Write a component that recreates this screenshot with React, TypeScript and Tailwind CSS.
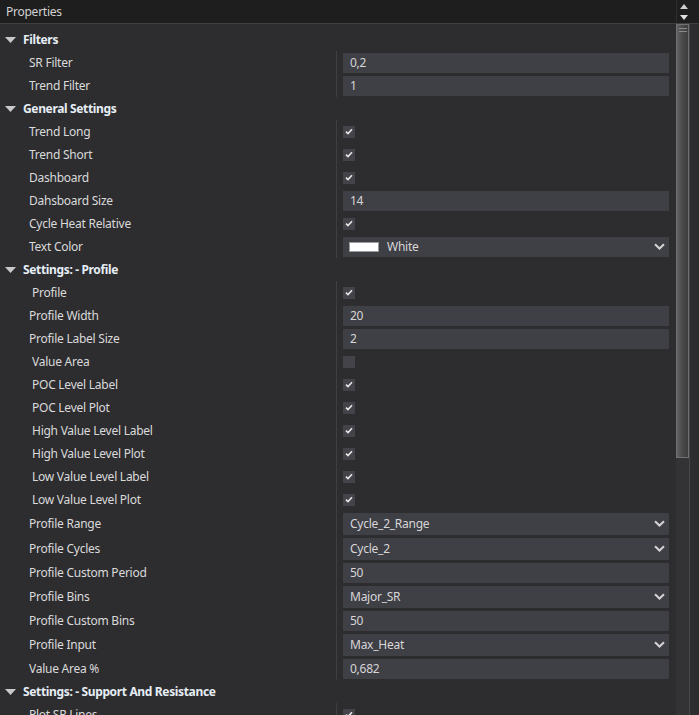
import React from 'react';

type Row =
  | { kind: 'header'; label: string }
  | { kind: 'text'; label: string; value: string; indent?: boolean }
  | { kind: 'check'; label: string; checked: boolean; indent?: boolean }
  | { kind: 'select'; label: string; value: string; swatch?: boolean; tall?: boolean };

const rows: Row[][] = [
  [
    { kind: 'header', label: 'Filters' },
    { kind: 'text', label: 'SR Filter', value: '0,2' },
    { kind: 'text', label: 'Trend Filter', value: '1' },
  ],
  [
    { kind: 'header', label: 'General Settings' },
    { kind: 'check', label: 'Trend Long', checked: true },
    { kind: 'check', label: 'Trend Short', checked: true },
    { kind: 'check', label: 'Dashboard', checked: true },
    { kind: 'text', label: 'Dahsboard Size', value: '14' },
    { kind: 'check', label: 'Cycle Heat Relative', checked: true },
    { kind: 'select', label: 'Text Color', value: 'White', swatch: true },
  ],
  [
    { kind: 'header', label: 'Settings: - Profile' },
    { kind: 'check', label: 'Profile', checked: true, indent: true },
    { kind: 'text', label: 'Profile Width', value: '20' },
    { kind: 'text', label: 'Profile Label Size', value: '2' },
    { kind: 'check', label: 'Value Area', checked: false, indent: true },
    { kind: 'check', label: 'POC Level Label', checked: true, indent: true },
    { kind: 'check', label: 'POC Level Plot', checked: true, indent: true },
    { kind: 'check', label: 'High Value Level Label', checked: true, indent: true },
    { kind: 'check', label: 'High Value Level Plot', checked: true, indent: true },
    { kind: 'check', label: 'Low Value Level Label', checked: true, indent: true },
    { kind: 'check', label: 'Low Value Level Plot', checked: true, indent: true },
    { kind: 'select', label: 'Profile Range', value: 'Cycle_2_Range', tall: true },
    { kind: 'select', label: 'Profile Cycles', value: 'Cycle_2', tall: true },
    { kind: 'text', label: 'Profile Custom Period', value: '50' },
    { kind: 'select', label: 'Profile Bins', value: 'Major_SR', tall: true },
    { kind: 'text', label: 'Profile Custom Bins', value: '50' },
    { kind: 'select', label: 'Profile Input', value: 'Max_Heat', tall: true },
    { kind: 'text', label: 'Value Area %', value: '0,682' },
  ],
  [
    { kind: 'header', label: 'Settings: - Support And Resistance' },
    { kind: 'check', label: 'Plot SR Lines', checked: true },
  ],
];

const Chevron = () => (
  <svg width="11" height="7" viewBox="0 0 11 7" className="shrink-0">
    <path d="M1 1.2 L5.5 5.5 L10 1.2" fill="none" stroke="#d4d4d4" strokeWidth="2" />
  </svg>
);

const CheckBox: React.FC<{ checked: boolean }> = ({ checked }) => (
  <div className="w-[12px] h-[12px] bg-[#434349] flex items-center justify-center">
    {checked && (
      <svg width="8" height="7" viewBox="0 0 8 7">
        <path d="M1 3.6 L3 5.5 L7 1.3" fill="none" stroke="#e8e8e8" strokeWidth="1.6" />
      </svg>
    )}
  </div>
);

const PropRow: React.FC<{ row: Row }> = ({ row }) => {
  if (row.kind === 'header') {
    return (
      <div className="h-[23px] flex items-center">
        <svg width="11" height="6" viewBox="0 0 11 6" className="ml-[5px] mr-[7px]">
          <path d="M0 0 H11 L5.5 6 Z" fill="#c9c9c9" />
        </svg>
        <span className="font-bold text-[#e6edf5] tracking-[-0.35px]">{row.label}</span>
      </div>
    );
  }
  const tall = row.kind === 'select' && row.tall;
  const indent = row.kind !== 'select' && row.indent;
  return (
    <div className={`flex ${tall ? 'h-[25px]' : 'h-[23px]'}`}>
      <div className={`w-[336px] flex items-center ${indent ? 'pl-[32px]' : 'pl-[29px]'} text-[#dadada]`}>
        {row.label}
      </div>
      <div className="flex-1 border-l border-[#3e3e43] pl-[6px] pr-[7px] flex items-center">
        {row.kind === 'check' && <CheckBox checked={row.checked} />}
        {row.kind === 'text' && (
          <div className="w-full h-[20px] bg-[#3f3f46] flex items-center pl-[7px] text-[#d6d6d6]">{row.value}</div>
        )}
        {row.kind === 'select' && (
          <div
            className={`w-full ${tall ? 'h-[22px]' : 'h-[20px]'} bg-[#3f3f46] flex items-center pl-[7px] pr-[4px] text-[#d6d6d6]`}
          >
            {row.swatch && <div className="w-[30px] h-[10px] bg-white border border-[#9a9a9a] mr-[8px] -ml-[1px]" />}
            <span className="flex-1">{row.value}</span>
            <Chevron />
          </div>
        )}
      </div>
    </div>
  );
};

export default function App() {
  return (
    <div
      className="w-[699px] h-[715px] overflow-hidden bg-[#2d2d30] flex flex-col text-[12px] leading-none tracking-[-0.25px]"
      style={{ fontFamily: '"Noto Sans", "Open Sans", sans-serif' }}
    >
      {/* title bar */}
      <div className="h-[24px] shrink-0 bg-[#1e1e1e] border-b border-[#3f3f44] flex">
        <div className="flex-1 flex items-center pl-[6px] text-[#d2d2d2]">Properties</div>
        <div className="w-[14px] border-l border-[#2f2f33] flex flex-col items-center justify-center gap-[6px]">
          <svg width="8" height="5" viewBox="0 0 8 5">
            <path d="M0 5 L4 0 L8 5 Z" fill="#cfcfcf" />
          </svg>
          <svg width="8" height="5" viewBox="0 0 8 5">
            <path d="M0 0 L8 0 L4 5 Z" fill="#e0e0e0" />
          </svg>
        </div>
        <div className="w-[9px]" />
      </div>

      <div className="flex-1 flex min-h-0">
        <div className="flex-1 pt-[4px]">
          {rows.map((group, gi) => (
            <div key={gi}>
              {group.map((r, i) => (
                <PropRow key={i} row={r} />
              ))}
            </div>
          ))}
        </div>

        {/* scrollbar */}
        <div className="w-[23px] flex shrink-0">
          <div className="w-[14px] bg-[#333336] border-r border-[#46464a] flex flex-col">
            <div className="h-[434px] border border-[#707070] bg-gradient-to-r from-[#626262] via-[#4a4a4a] to-[#3d3d3d] flex flex-col items-end pt-[3px] pr-[1px] gap-[2px]">
              <div className="w-[8px] h-px bg-[#8a8a8a]" />
              <div className="w-[8px] h-px bg-[#8a8a8a]" />
            </div>
          </div>
        </div>
      </div>
    </div>
  );
}
